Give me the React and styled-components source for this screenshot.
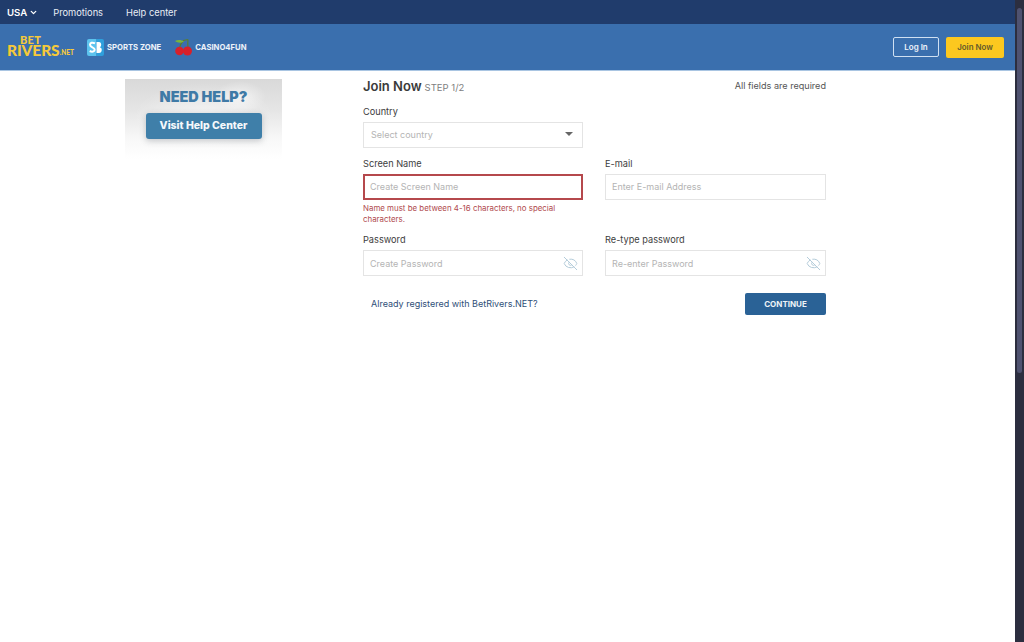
import React from "react";
import styled, { createGlobalStyle } from "styled-components";
import { ChevronDown, EyeOff } from "lucide-react";

const Global = createGlobalStyle`
  html, body { margin: 0; padding: 0; height: 100%; overflow: hidden; background: #fff; }
  #root { height: 100%; }
  * { box-sizing: border-box; }
`;

const Shell = styled.div`
  display: flex;
  height: 642px;
  font-family: "Inter", "Liberation Sans", sans-serif;
  color: #3a3a3a;
`;
const Page = styled.div`
  flex: 1;
  min-width: 0;
  background: #fff;
`;
const ScrollTrack = styled.div`
  width: 9px;
  background: #2c2e3f;
  padding: 8px 2px 0;
`;
const ScrollThumb = styled.div`
  height: 365px;
  border-radius: 3px;
  background: #4f5270;
`;
const TopBar = styled.nav`
  height: 24px;
  background: #203c6c;
  display: flex;
  align-items: center;
  padding-left: 7px;
  color: #e9eef6;
  font-size: 9.3px;
`;
const Region = styled.span`
  display: flex;
  align-items: center;
  gap: 2px;
  font-weight: 600;
  font-size: 9.6px;
  color: #fff;
  margin-right: 15px;
`;
const TopLink = styled.a`
  margin-right: 23px;
`;
const Header = styled.header`
  height: 47px;
  background: #3a6fae;
  border-bottom: 1px solid #a9c5e2;
  display: flex;
  align-items: center;
  padding: 0 11px 0 7px;
`;
const Logo = styled.div`
  position: relative;
  width: 67px;
  height: 24px;
  margin-right: 13px;
  color: #f5c93a;
  font-family: "Lato", sans-serif;
  font-weight: 900;
`;
const LogoBet = styled.span`
  position: absolute;
  left: 13px;
  top: 1px;
  font-size: 11px;
  line-height: 8px;
  letter-spacing: 0.3px;
`;
const LogoRivers = styled.span`
  position: absolute;
  left: 0;
  top: 9px;
  font-size: 15.5px;
  line-height: 13px;
  letter-spacing: -0.1px;
`;
const LogoNet = styled.span`
  position: absolute;
  right: 0;
  bottom: 3px;
  font-size: 6.5px;
  line-height: 6px;
`;
const Brand = styled.div`
  display: flex;
  align-items: center;
  gap: ${(p) => p.$gap}px;
  color: #eef3fa;
  font-size: 7.7px;
  font-weight: 700;
  margin-right: 14px;
  white-space: nowrap;
`;
const HeaderActions = styled.div`
  margin-left: auto;
  display: flex;
  align-items: center;
  gap: 7px;
`;
const LoginButton = styled.button`
  width: 46px;
  height: 20px;
  padding: 0;
  border: 1.5px solid #cfe0f2;
  border-radius: 2px;
  background: transparent;
  color: #eef3fa;
  font: 600 8px "Inter", sans-serif;
`;
const JoinButton = styled.button`
  width: 58px;
  height: 21px;
  padding: 0;
  border: 0;
  border-radius: 2px;
  background: #fcc81f;
  color: #63592c;
  font: 600 7.9px "Inter", sans-serif;
`;
const Content = styled.main`
  display: flex;
  padding: 8px 0 0 125px;
`;
const Banner = styled.aside`
  width: 157px;
  height: 80px;
  margin-right: 81px;
  flex: none;
  display: flex;
  flex-direction: column;
  align-items: center;
  padding-top: 10px;
  background:
    radial-gradient(ellipse 26px 16px at 115px 18px, rgba(255,255,255,0.6), transparent),
    radial-gradient(ellipse 70px 34px at 50% 38px, rgba(255,255,255,0.55), transparent),
    linear-gradient(180deg, #d9d9d9 0%, #e6e6e6 40%, #f8f8f8 75%, #ffffff 100%);
`;
const BannerTitle = styled.div`
  font: 900 14.4px/16px "Inter", sans-serif;
  color: #3f7aa6;
  margin-bottom: 8px;
`;
const BannerButton = styled.div`
  width: 116px;
  height: 26px;
  border-radius: 3px;
  background: #3f7fa9;
  color: #f5f8fb;
  font: 800 10.5px/26px "Inter", sans-serif;
  text-align: center;
  box-shadow: 0 2px 6px rgba(60, 70, 80, 0.28);
`;
const Form = styled.form`
  width: 463px;
  flex: none;
  display: grid;
  grid-template-columns: 220px 221px;
  column-gap: 22px;
  align-content: start;
`;
const TitleRow = styled.div`
  grid-column: 1 / -1;
  height: 16px;
  display: flex;
  align-items: flex-start;
  justify-content: space-between;
  margin-bottom: 9px;
`;
const TitleText = styled.h1`
  margin: 0;
  font-size: 13px;
  line-height: 14px;
  font-weight: 600;
  color: #3a3a3a;
`;
const Step = styled.span`
  margin-left: 3px;
  font-size: 9.5px;
  font-weight: 400;
  color: #808080;
`;
const Required = styled.span`
  font-size: 9.1px;
  line-height: 13px;
  color: #555;
`;
const Field = styled.div`
  min-width: 0;
  grid-column: ${(p) => (p.$wide ? "1 / -1" : "auto")};
  margin-bottom: ${(p) => p.$gap ?? 0}px;
`;
const Label = styled.label`
  display: block;
  height: 15px;
  margin-bottom: 3px;
  font-size: 9.2px;
  line-height: 15px;
  color: #3d3d3d;
`;
const InputBox = styled.div`
  width: ${(p) => (p.$full ? "100%" : "220px")};
  height: 26px;
  display: flex;
  align-items: center;
  justify-content: space-between;
  padding: ${(p) => p.$pad};
  background: #fff;
  border: ${(p) => (p.$error ? "2px solid #b5484c" : "1px solid #e4e4e4")};
  color: #b4b4b4;
  font-size: 9px;
`;
const Caret = styled.span`
  width: 0;
  height: 0;
  border-left: 4px solid transparent;
  border-right: 4px solid transparent;
  border-top: 4px solid #666;
`;
const Hint = styled.div`
  margin-top: 3px;
  font-size: 7.9px;
  line-height: 11px;
  color: #b04a4e;
  height: 29px;
  width: 215px;
`;
const Footer = styled.div`
  grid-column: 1 / -1;
  display: flex;
  align-items: center;
  justify-content: space-between;
  margin-top: 17px;
  padding-left: 8px;
`;
const Registered = styled.a`
  font-size: 9px;
  line-height: 20px;
  color: #2f4f78;
`;
const ContinueButton = styled.button`
  width: 81px;
  height: 22px;
  padding: 0;
  border: 0;
  border-radius: 2px;
  background: #2a6296;
  color: #eef3f8;
  font: 700 8px "Inter", sans-serif;
`;

const SportsIcon = () => (
  <svg width="17" height="17" viewBox="0 0 17 17">
    <path d="M2 0h7.500v17H2a2 2 0 0 1-2-2V2a2 2 0 0 1 2-2z" fill="#5cc3ee" />
    <path d="M9.500 0H15a2 2 0 0 1 2 2v13a2 2 0 0 1-2 2H9.500z" fill="#2f9fdc" />
    <path d="M8 4.300C5.500 3 3 3.700 3 5.800c0 2.800 4.700 2.200 4.700 4.900 0 2-2.700 2.500-5 1.300" fill="none" stroke="#fff" strokeWidth="2" />
    <path d="M9.500 3H12c2.800 0 2.800 4.600.8 5.200 2.800.5 2.700 5.800-.8 5.800H9.500z" fill="#fff" />
  </svg>
);

const CherryIcon = () => (
  <svg width="18" height="18" viewBox="0 0 18 18">
    <path d="M4.500 10C5 7 6.500 4.500 8.500 2.500l4.500-1M13 10c-.3-3-.3-6 0-8.500" fill="none" stroke="#5b7f2c" strokeWidth="1.100" />
    <path d="M0 3c2.500-1.500 6-1.500 9 .5-3 1.800-6.500 1.500-9-.5z" fill="#79b53a" />
    <circle cx="4.500" cy="13" r="4.300" fill="#d8202a" />
    <circle cx="12.500" cy="13" r="4.500" fill="#d8202a" />
  </svg>
);

const PasswordEye = () => <EyeOff size={15} color="#b4ccda" strokeWidth={1.6} />;

export default function App() {
  return (
    <Shell>
      <Global />
      <Page>
        <TopBar>
          <Region>
            USA <ChevronDown size={9} strokeWidth={3.5} />
          </Region>
          <TopLink>Promotions</TopLink>
          <TopLink>Help center</TopLink>
        </TopBar>
        <Header>
          <Logo>
            <LogoBet>BET</LogoBet>
            <LogoRivers>RIVERS</LogoRivers>
            <LogoNet>.NET</LogoNet>
          </Logo>
          <Brand $gap={3}>
            <SportsIcon />
            SPORTS ZONE
          </Brand>
          <Brand $gap={2}>
            <CherryIcon />
            CASINO4FUN
          </Brand>
          <HeaderActions>
            <LoginButton>Log In</LoginButton>
            <JoinButton>Join Now</JoinButton>
          </HeaderActions>
        </Header>
        <Content>
          <Banner>
            <BannerTitle>NEED HELP?</BannerTitle>
            <BannerButton>Visit Help Center</BannerButton>
          </Banner>
          <Form>
            <TitleRow>
              <TitleText>
                Join Now<Step>STEP 1/2</Step>
              </TitleText>
              <Required>All fields are required</Required>
            </TitleRow>
            <Field $wide $gap={8}>
              <Label>Country</Label>
              <InputBox $pad="0 9px 2px 7px">
                Select country
                <Caret />
              </InputBox>
            </Field>
            <Field>
              <Label>Screen Name</Label>
              <InputBox $error $pad="0 5px 1px">Create Screen Name</InputBox>
              <Hint>Name must be between 4-16 characters, no special characters.</Hint>
            </Field>
            <Field>
              <Label>E-mail</Label>
              <InputBox $full $pad="0 4px 2px 6px">Enter E-mail Address</InputBox>
            </Field>
            <Field>
              <Label>Password</Label>
              <InputBox $pad="0 4px 0 6px">
                Create Password
                <PasswordEye />
              </InputBox>
            </Field>
            <Field>
              <Label>Re-type password</Label>
              <InputBox $full $pad="0 4px 0 6px">
                Re-enter Password
                <PasswordEye />
              </InputBox>
            </Field>
            <Footer>
              <Registered>Already registered with BetRivers.NET?</Registered>
              <ContinueButton type="button">CONTINUE</ContinueButton>
            </Footer>
          </Form>
        </Content>
      </Page>
      <ScrollTrack>
        <ScrollThumb />
      </ScrollTrack>
    </Shell>
  );
}
